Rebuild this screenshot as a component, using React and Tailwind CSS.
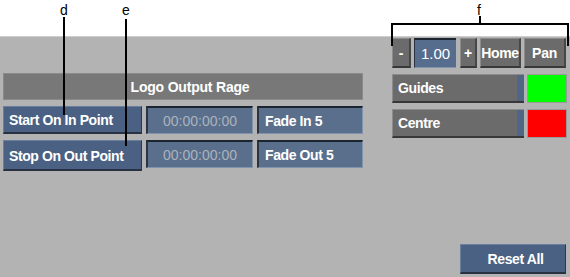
import React from 'react';

const font = { fontFamily: '"Liberation Sans", Arial, sans-serif' };

function BlueButton({ label, className = '' }) {
    return (
        <div
            className={`flex items-center pl-[5px] pt-[2px] bg-[#4b6183] text-white text-[14px] font-bold tracking-[-0.4px] border-t border-l border-t-[#6a7f9c] border-l-[#6a7f9c] border-b-2 border-r border-b-[#27313f] border-r-[#2e3847] ${className}`}
        >
            {label}
        </div>
    );
}

function Field({ label, dim = false, className = '' }) {
    return (
        <div
            className={`flex items-center pt-[1px] bg-[#5a6f8c] border-t-2 border-l-2 border-t-[#1c2430] border-l-[#2a3442] border-b border-r border-b-[#8294ac] border-r-[#8294ac] text-[14px] ${dim ? 'justify-center text-[#abb3bd]' : 'pl-[6px] text-white font-bold tracking-[-0.4px]'} ${className}`}
        >
            {label}
        </div>
    );
}

function GrayButton({ label, className = '' }) {
    return (
        <div
            className={`flex items-center justify-center pt-[1px] bg-[#6b6b6b] text-white text-[14px] font-bold tracking-[-0.3px] border-t border-l border-t-[#8c8c8c] border-l-[#8c8c8c] border-b-2 border-r-2 border-b-[#383838] border-r-[#474747] ${className}`}
        >
            {label}
        </div>
    );
}

function ToggleRow({ label, swatch }) {
    return (
        <div className="flex gap-[3px] h-[29px]">
            <div className="flex w-[132px] border-t border-l border-t-[#8c8c8c] border-l-[#8c8c8c] border-b-2 border-b-[#383838]">
                <div className="flex-1 flex items-center pl-[5px] pt-[1px] bg-[#6b6b6b] text-white text-[14px] font-bold tracking-[-0.4px]">
                    {label}
                </div>
                <div className="w-[7px] bg-[#4f6685]" />
            </div>
            <div className={`w-[40px] ${swatch} border border-[#9a9a9a]`} />
        </div>
    );
}

export default function App() {
    return (
        <div className="relative w-[570px] h-[277px] bg-white flex flex-col" style={font}>
            <div className="h-[36px]" />
            <div className="flex-1 flex bg-[#b3b3b3] border-t border-t-[#cdcdcd] pb-[3px]">
                <div className="ml-[3px] mt-[36px] w-[360px] flex flex-col">
                    <div className="h-[27px] flex items-center justify-center pl-[14px] pt-[2px] bg-[#787878] border border-[#8a8a8a] text-white text-[14px] font-bold tracking-[-0.2px]">
                        Logo Output Rage
                    </div>
                    <div className="flex gap-[4px] mt-[6px] h-[28px]">
                        <BlueButton label="Start On In Point" className="w-[139px]" />
                        <Field label="00:00:00:00" dim className="w-[107px]" />
                        <Field label="Fade In 5" className="w-[106px]" />
                    </div>
                    <div className="flex gap-[4px] mt-[6px] h-[31px]">
                        <BlueButton label="Stop On Out Point" className="w-[139px]" />
                        <Field label="00:00:00:00" dim className="w-[107px] h-[28px]" />
                        <Field label="Fade Out 5" className="w-[106px] h-[28px]" />
                    </div>
                </div>
                <div className="ml-auto mr-[2px] w-[176px] flex flex-col">
                    <div className="flex mt-[1px] h-[30px] gap-[3px]">
                        <GrayButton label="-" className="w-[19px]" />
                        <div className="w-[42px] flex items-center justify-center pt-[1px] bg-[#566d8d] text-white text-[15px] border-t-2 border-l border-t-[#1c2430] border-l-[#2a3442] border-b border-b-[#8294ac]">
                            1.00
                        </div>
                        <GrayButton label="+" className="w-[17px] ml-[1px]" />
                        <GrayButton label="Home" className="w-[41px]" />
                        <GrayButton label="Pan" className="w-[42px]" />
                    </div>
                    <div className="flex flex-col gap-[6px] mt-[6px]">
                        <ToggleRow label="Guides" swatch="bg-[#00ff00]" />
                        <ToggleRow label="Centre" swatch="bg-[#ff0000]" />
                    </div>
                    <div className="mt-auto flex justify-end pr-[2px]">
                        <BlueButton label="Reset All" className="w-[106px] h-[30px] justify-center pl-0" />
                    </div>
                </div>
            </div>

            {/* callouts */}
            <div className="absolute left-[60px] top-0 text-[14px] text-black">d</div>
            <div className="absolute left-[63px] top-[17px] w-[2px] h-[98px] bg-black" />
            <div className="absolute left-[122px] top-0 text-[14px] text-black">e</div>
            <div className="absolute left-[125px] top-[19px] w-[2px] h-[127px] bg-black" />
            <div className="absolute left-[477px] top-0 text-[14px] text-black">f</div>
            <div className="absolute left-[479px] top-[16px] w-[2px] h-[9px] bg-black" />
            <div className="absolute left-[391px] top-[23px] w-[178px] h-[23px] border-t-2 border-l-2 border-r-2 border-black" />
        </div>
    );
}
